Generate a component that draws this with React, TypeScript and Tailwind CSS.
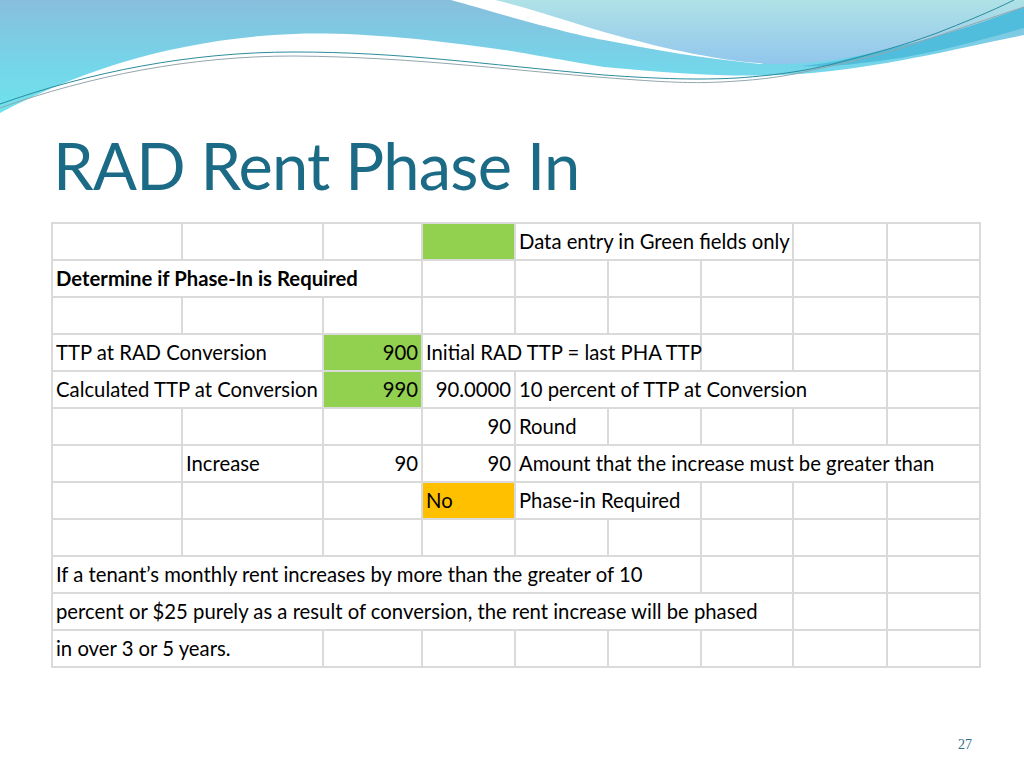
type Cell = {
  span?: number;
  text?: string;
  align?: "left" | "right";
  fill?: "green" | "orange";
  bold?: boolean;
};

const rows: Cell[][] = [
  [{}, {}, {}, { fill: "green" }, { span: 3, text: "Data entry in Green fields only" }, {}, {}],
  [{ span: 3, text: "Determine if Phase-In is Required", bold: true }, {}, {}, {}, {}, {}, {}],
  [{}, {}, {}, {}, {}, {}, {}, {}, {}],
  [
    { span: 2, text: "TTP at RAD Conversion" },
    { text: "900", align: "right", fill: "green" },
    { span: 3, text: "Initial RAD TTP = last PHA TTP" },
    {},
    {},
    {},
  ],
  [
    { span: 2, text: "Calculated TTP at Conversion" },
    { text: "990", align: "right", fill: "green" },
    { text: "90.0000", align: "right" },
    { span: 4, text: "10 percent of TTP at Conversion" },
    {},
  ],
  [{}, {}, {}, { text: "90", align: "right" }, { text: "Round" }, {}, {}, {}, {}],
  [
    {},
    { text: "Increase" },
    { text: "90", align: "right" },
    { text: "90", align: "right" },
    { span: 5, text: "Amount that the increase must be greater than" },
  ],
  [{}, {}, {}, { text: "No", fill: "orange" }, { span: 2, text: "Phase-in Required" }, {}, {}, {}],
  [{}, {}, {}, {}, {}, {}, {}, {}, {}],
  [
    { span: 6, text: "If a tenant\u2019s monthly rent increases by more than the greater of 10" },
    {},
    {},
    {},
  ],
  [
    {
      span: 7,
      text: "percent or $25 purely as a result of conversion, the rent increase will be phased",
    },
    {},
    {},
  ],
  [{ span: 2, text: "in over 3 or 5 years." }, {}, {}, {}, {}, {}, {}, {}],
];

const spanClass: Record<number, string> = {
  1: "col-span-1",
  2: "col-span-2",
  3: "col-span-3",
  4: "col-span-4",
  5: "col-span-5",
  6: "col-span-6",
  7: "col-span-7",
};

// decorative header swoosh
function Wave() {
  return (
    <svg width="1024" height="120" viewBox="0 0 1024 120" className="block">
      <defs>
        <linearGradient id="cyan" x1="0" y1="0" x2="0" y2="1">
          <stop offset="0" stopColor="#88bedc" />
          <stop offset="0.6" stopColor="#74d6ea" />
          <stop offset="1" stopColor="#6fe3ec" />
        </linearGradient>
        <linearGradient id="sky" x1="0" y1="0" x2="0" y2="1">
          <stop offset="0" stopColor="#afe2e6" />
          <stop offset="1" stopColor="#92c6ec" />
        </linearGradient>
      </defs>
      <path
        d="M0 0 L451 0 C480 8 560 32 604 40 C650 49 700 58 760 64 L1024 0 L1024 35 C960 48 880 68 800 74 C740 78 680 74 604 67 C560 60 520 52 504 50 C420 38 350 32 294 34 C180 38 80 70 0 113 Z"
        fill="url(#cyan)"
      />
      <path
        d="M495 0 C530 8 570 22 604 32 C640 42 700 58 757 63 C790 66 830 62 871 53 C930 40 980 24 1024 7 L1024 0 Z"
        fill="url(#sky)"
      />
      <path
        d="M800 66 C830 64 850 58 871 53 C930 40 980 24 1024 7 L1024 28 C980 40 930 55 870 62 C840 66 820 67 800 66 Z"
        fill="#4fbddb"
      />
      <path
        d="M0 104 C90 72 190 52 294 52 C400 52 480 64 604 75 C660 79 700 80 737 78 C780 75 810 70 837 63 C880 52 910 43 937 33 C960 24 990 12 1014 0"
        fill="none"
        stroke="#2b8c9c"
        strokeWidth="1"
      />
      <path
        d="M0 108 C90 76 190 56 294 56 C420 57 520 72 637 80 C680 83 700 83 721 82 C760 80 780 77 804 72 C850 62 880 55 904 47 C950 32 990 18 1024 7"
        fill="none"
        stroke="#94a6ae"
        strokeWidth="1"
      />
    </svg>
  );
}

export default function App() {
  return (
    <div className="w-[1024px] h-[768px] bg-white flex flex-col overflow-hidden font-['Lato',sans-serif]">
      <Wave />
      <h1 className="ml-[53px] text-[65px] tracking-[-0.8px] leading-[90px] text-[#1b6a86] font-normal">
        RAD Rent Phase In
      </h1>
      <div className="ml-[51px] mt-[12px] w-[930px] grid grid-cols-[128px_139px_97px_91px_91px_91px_90px_92px_91px] auto-rows-[35px] gap-[2px] p-[2px] bg-[#dadada]">
        {rows.map((row, r) =>
          row.map((c, i) => (
            <div
              key={`${r}-${i}`}
              className={[
                spanClass[c.span ?? 1],
                "flex items-center px-[3px] text-[20.3px] text-black whitespace-nowrap overflow-visible",
                c.align === "right" ? "justify-end" : "justify-start",
                c.fill === "green" ? "bg-[#92d050]" : c.fill === "orange" ? "bg-[#ffc000]" : "bg-white",
                c.bold ? "font-bold" : "",
              ].join(" ")}
            >
              {c.text}
            </div>
          )),
        )}
      </div>
      <div className="mt-auto mb-[13px] mr-[52px] self-end text-[14px] text-[#2f6f8a] font-['Liberation_Serif',serif]">
        27
      </div>
    </div>
  );
}
